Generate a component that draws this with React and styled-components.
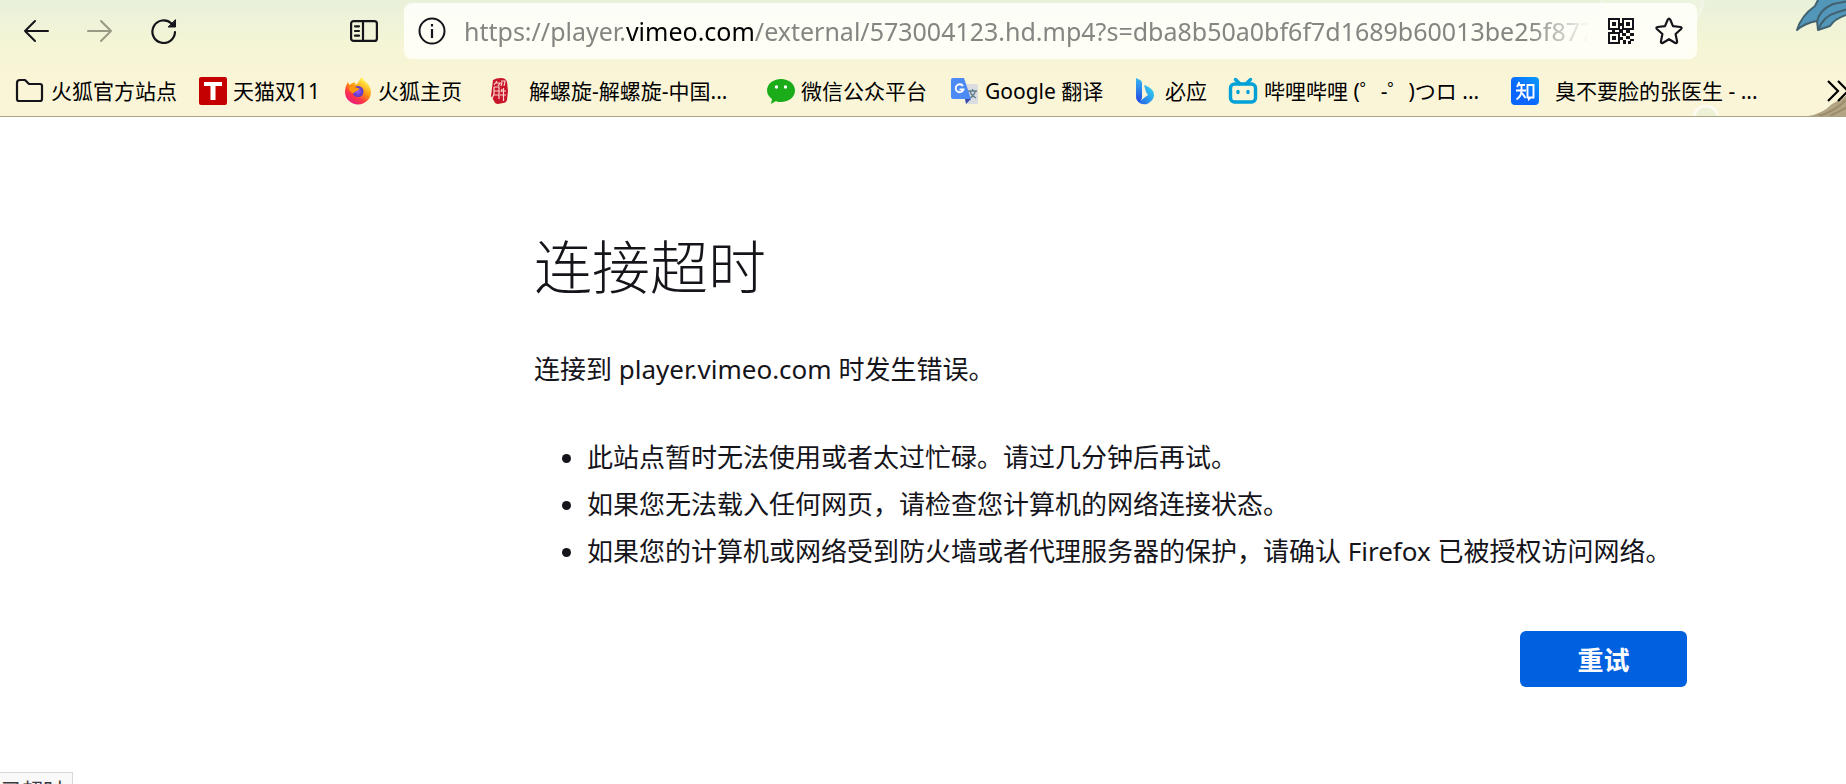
import React from "react";
import styled, { createGlobalStyle } from "styled-components";

const GlobalStyle = createGlobalStyle`
  * {
    box-sizing: border-box;
  }
  body {
    margin: 0;
    background: #fff;
    color: #15141a;
    font-family: "Noto Sans", "Noto Sans CJK SC", sans-serif;
  }
  button {
    font-family: inherit;
    cursor: pointer;
  }
`;

const Window = styled.div`
  display: flex;
  flex-direction: column;
  height: 100vh;
  overflow: hidden;
`;
const Chrome = styled.header`
  position: relative;
  border-bottom: 1px solid #a9a582;
  background: linear-gradient(#e9f1da 0, #f5f5d6 44px, #faf5d7 80px, #faf5d8 100%);
`;
const ThemeArt = styled.svg`
  position: absolute;
  top: 0;
  right: 0;
`;
const NavBar = styled.nav`
  position: relative;
  display: flex;
  align-items: center;
  height: 64px;
  padding: 0 149px 2px 20px;
`;
const IconButton = styled.button`
  display: flex;
  flex-shrink: 0;
  align-items: center;
  justify-content: center;
  width: 32px;
  height: 32px;
  margin-right: ${(props) => props.$gap || 0}px;
  padding: 0;
  border: 0;
  background: none;
  color: #15141a;
  &:disabled {
    color: #9a9984;
  }
`;
const UrlBar = styled.div`
  display: flex;
  flex: 1;
  align-items: center;
  gap: 16px;
  min-width: 0;
  height: 56px;
  padding: 0 12px;
  border-radius: 8px;
  background: rgba(255, 255, 250, 0.85);
`;
const UrlField = styled.label`
  position: relative;
  display: block;
  flex: 1;
  min-width: 0;
  overflow: hidden;
  font-size: 25px;
  line-height: 40px;
  white-space: nowrap;
  color: #858582;
  mask-image: linear-gradient(to left, transparent, #000 60px);
  b {
    font-weight: 400;
    color: #000;
  }
`;
const UrlInput = styled.input`
  position: absolute;
  inset: 0;
  width: 100%;
  border: 0;
  background: none;
  outline: 0;
`;
const Bookmarks = styled.nav`
  position: relative;
  display: flex;
  align-items: center;
  height: 52px;
  padding: 2px 0 0 14px;
  overflow: hidden;
`;
const Bookmark = styled.a`
  display: flex;
  flex-shrink: 0;
  align-items: center;
  width: ${(props) => props.$width}px;
  color: #000;
  font-size: 21px;
  line-height: 32px;
  white-space: nowrap;
  text-decoration: none;
  svg {
    flex-shrink: 0;
    margin-right: ${(props) => (props.$wide ? 16 : 6)}px;
  }
`;
const More = styled.button`
  display: flex;
  flex-shrink: 0;
  align-items: center;
  width: 20px;
  height: 32px;
  margin-left: auto;
  padding: 0;
  border: 0;
  background: none;
  overflow: hidden;
  svg {
    flex-shrink: 0;
  }
`;
const Page = styled.main`
  display: flex;
  flex: 1;
  justify-content: flex-end;
  min-height: 0;
  padding: 110px 159px 0 0;
`;
const ErrorBox = styled.section`
  width: 1153px;
  font-size: 26px;
`;
const Title = styled.h1`
  margin: 0;
  font-size: 58px;
  font-weight: 300;
  line-height: 80px;
`;
const Message = styled.p`
  margin: 42px 0 0;
  line-height: 40px;
`;
const Tips = styled.ul`
  margin: 45px 0 0;
  padding-left: 53px;
  line-height: 47px;
`;
const Actions = styled.div`
  display: flex;
  justify-content: flex-end;
  margin-top: 56px;
`;
const RetryButton = styled.button`
  min-width: 167px;
  height: 56px;
  padding: 0 24px;
  border: 0;
  border-radius: 6px;
  background: #0061e0;
  color: #fbfbfe;
  font-size: 26px;
  font-weight: 700;
`;
const StatusPanel = styled.div`
  align-self: flex-start;
  flex-shrink: 0;
  height: 12px;
  padding: 4px 8px 0 1px;
  border: 1px solid #d7d7db;
  border-width: 1px 1px 0 0;
  background: #f9f9fa;
  color: #38383d;
  font-size: 21px;
  line-height: 26px;
  overflow: hidden;
`;

const BackIcon = () => (
  <svg width="26" height="24" viewBox="0 0 26 24" fill="none" stroke="currentColor" strokeWidth="2" strokeLinecap="round" strokeLinejoin="round">
    <path d="M25 12H2M12 2 2 12l10 10" />
  </svg>
);
const ForwardIcon = () => (
  <svg width="26" height="24" viewBox="0 0 26 24" fill="none" stroke="currentColor" strokeWidth="2" strokeLinecap="round" strokeLinejoin="round">
    <path d="M1 12h23M14 2l10 10-10 10" />
  </svg>
);
const ReloadIcon = () => (
  <svg width="26" height="26" viewBox="0 0 26 26" fill="none" stroke="currentColor" strokeWidth="2.2" strokeLinecap="round">
    <path d="M24 14A11.3 11.3 0 1 1 20.5 5.5" />
    <path d="M24.5 2v7h-7z" fill="currentColor" strokeWidth="1" strokeLinejoin="round" />
  </svg>
);
const SidebarIcon = () => (
  <svg width="28" height="22" viewBox="0 0 28 22" fill="none" stroke="currentColor" strokeWidth="2.2" strokeLinecap="round">
    <rect x="1.1" y="1.1" width="25.8" height="19.8" rx="2.5" />
    <path d="M13 1v20M5 6.300h4M5 11h4M5 15.700h4" />
  </svg>
);
const InfoIcon = () => (
  <svg width="28" height="28" viewBox="0 0 28 28" fill="none" stroke="#15141a" strokeWidth="2">
    <circle cx="14" cy="14" r="12.500" />
    <path d="M14 12v9M14 7v2.500" strokeWidth="2.200" />
  </svg>
);
const QrIcon = () => (
  <svg width="26" height="26" viewBox="0 0 26 26" fill="#15141a">
    <path d="M1 1h10v10H1zM15 1h10v10H15zM1 15h10v10H1z" fill="none" stroke="#15141a" strokeWidth="2" />
    <path d="M4 4h4v4H4zM18 4h4v4h-4zM4 18h4v4H4z" />
    <path d="M11 5h4v3h-4zM4 12h3v3H4zM11 11h4v4h-4zM18 12h4v3h-4zM14 15h4v3h-4zM22 15h4v3h-4zM18 18h4v3h-4zM12 19h3v3h-3zM22 21h4v2h-4zM15 22h3v4h-3zM20 23h3v3h-3z" />
  </svg>
);
const StarIcon = () => (
  <svg width="28" height="28" viewBox="0 0 28 28" fill="none" stroke="#15141a" strokeWidth="2.200" strokeLinejoin="round">
    <path d="M12.800 2.500q1.200-2 2.400 0l2.800 6.700 7.400.8q2 .4.700 2L20.600 17l1.500 7.600q.1 2-1.800 1.400L14 22.200 7.700 26q-1.900.6-1.800-1.400L7.400 17 1.900 12q-1.300-1.600.7-2l7.400-.8z" />
  </svg>
);

const FolderIcon = () => (
  <svg width="31" height="28" viewBox="0 0 31 28" fill="none" stroke="#15141a" strokeWidth="2.200" strokeLinejoin="round">
    <path d="M3 6q0-3 3-3h5l4 4h11q2 0 2 2v13q0 2-2 2H5q-2 0-2-2z" />
  </svg>
);
const TmallIcon = () => (
  <svg width="28" height="28" viewBox="0 0 28 28">
    <rect width="28" height="28" rx="2" fill="#c40000" />
    <path d="M5 5h18v4h-6.500v14h-5V9H5z" fill="#fff" />
  </svg>
);
const FirefoxIcon = () => (
  <svg width="28" height="28" viewBox="0 0 28 28">
    <defs>
      <linearGradient id="fox" x1="0.8" y1="0" x2="0.2" y2="1">
        <stop offset="0.1" stopColor="#fff44f" />
        <stop offset="0.45" stopColor="#ff980e" />
        <stop offset="0.7" stopColor="#ff3647" />
        <stop offset="1" stopColor="#e31587" />
      </linearGradient>
      <radialGradient id="globe">
        <stop offset="0" stopColor="#9059ff" />
        <stop offset="1" stopColor="#5b33c0" />
      </radialGradient>
    </defs>
    <path d="M18 0c1 3 4 5 6 7 2 3 3 6 3 8a13 12.500 0 0 1-26 0c0-4 1-7 3-10l1.500 3 3-2c1 0 2-1 2-1l1 2.500c3-.5 3-4 6.500-7.500z" fill="url(#fox)" />
    <circle cx="14" cy="14.500" r="5.500" fill="url(#globe)" />
    <path d="M5 10.500c3-2 5-1 7 0l3.500 1c-1 3-4 2-5 4-1 2-5.500-1-5.500-5z" fill="#ff980e" />
  </svg>
);
const SealIcon = () => (
  <svg width="28" height="28" viewBox="0 0 28 28">
    <path d="M8 3q3-2 8-2 5 0 6 4l1 9-1 9q-1 3-4 3l-5 1q-3 0-4-3l-3-5 1-8z" fill="#c9152a" />
    <path d="M12 4l-3 4M11 6h4l-2 3M9 10v7l-2 5M9 10h5v12M9 14h5M9 18h5M16 4h4l-1 5M17 5l-1 4M17 12l-1 3M16 14h5M15 18h6M18.500 11v13" stroke="#f9d9cf" strokeWidth="1.200" fill="none" />
  </svg>
);
const WechatIcon = () => (
  <svg width="28" height="28" viewBox="0 0 28 28">
    <path d="M14 2c8 0 14 5 14 11.500S22 25 14 25c-2 0-4 0-5-1l-5 3 1-5C2 20 0 17 0 13.500 0 7 6 2 14 2z" fill="#1aad19" />
    <circle cx="9.500" cy="10" r="1.700" fill="#fff" />
    <circle cx="18.500" cy="10" r="1.700" fill="#fff" />
  </svg>
);
const TranslateIcon = () => (
  <svg width="28" height="28" viewBox="0 0 28 28">
    <path d="M10 7h15q2 0 2 2v16q0 2-2 2H16z" fill="#dadce0" />
    <path d="M17 14h9M21.500 12v2M19 14c1 4 4 6 6 7M24.500 14c-1 4-4 6-6 8" stroke="#607d8b" strokeWidth="1.300" fill="none" />
    <path d="M14 22h6l-5 5z" fill="#3949ab" />
    <path d="M2 1h11l7 21H2q-2 0-2-2V3q0-2 2-2z" fill="#4c8bf5" />
    <path d="M12 9a4 4 0 1 0 .500 3.500H8.500" stroke="#fff" strokeWidth="1.800" fill="none" />
  </svg>
);
const BingIcon = () => (
  <svg width="28" height="28" viewBox="0 0 28 28">
    <defs>
      <linearGradient id="bingStem" x1="0" y1="0" x2="0" y2="1">
        <stop offset="0" stopColor="#36b8f5" />
        <stop offset="1" stopColor="#2447df" />
      </linearGradient>
      <linearGradient id="bingBowl" x1="0" y1="1" x2="1" y2="0">
        <stop offset="0" stopColor="#2158e8" />
        <stop offset="1" stopColor="#38dff0" />
      </linearGradient>
    </defs>
    <path d="M13 8c6 2 10 5 10 10 0 4-3 7-7 9-4 1-8 0-10-4l3 1 8-6-2-3z" fill="url(#bingBowl)" />
    <path d="M5 1l4 2q2 1 2 3v15l-2 4q-4-1-4-5z" fill="url(#bingStem)" />
  </svg>
);
const BilibiliIcon = () => (
  <svg width="30" height="28" viewBox="0 0 30 28" fill="none" stroke="#00a1d6" strokeWidth="3.400" strokeLinecap="round">
    <rect x="2.500" y="7" width="25" height="18" rx="4" />
    <path d="M7.500 2.500l4 4M22.500 2.500l-4 4" />
    <path d="M10 14.500v1M20 14.500v1" />
  </svg>
);
const ZhihuIcon = () => (
  <svg width="28" height="28" viewBox="0 0 28 28">
    <defs>
      <linearGradient id="zhihu" x1="0" y1="1" x2="1" y2="0">
        <stop offset="0.4" stopColor="#0a66ff" />
        <stop offset="1" stopColor="#0a9cff" />
      </linearGradient>
    </defs>
    <rect width="28" height="28" rx="4" fill="url(#zhihu)" />
    <path d="M8.500 5L6 10M8 8h6M5 13.500h10M10.500 8v5.500c0 4-2 7-5 9M11 16l3.500 5" stroke="#fff" strokeWidth="1.900" fill="none" />
    <path d="M16.500 8h6v12.500h-3l-1.500 1.500v-1.500h-1.500z" stroke="#fff" strokeWidth="1.900" fill="none" />
  </svg>
);

const bookmarks = [
  { label: "火狐官方站点", icon: FolderIcon, width: 185 },
  { label: "天猫双11", icon: TmallIcon, width: 145 },
  { label: "火狐主页", icon: FirefoxIcon, width: 141 },
  { label: "解螺旋-解螺旋-中国...", icon: SealIcon, width: 282, wide: true },
  { label: "微信公众平台", icon: WechatIcon, width: 184 },
  { label: "Google 翻译", icon: TranslateIcon, width: 180 },
  { label: "必应", icon: BingIcon, width: 97 },
  { label: "哔哩哔哩 (゜-゜)つロ ...", icon: BilibiliIcon, width: 283 },
  { label: "臭不要脸的张医生 - ...", icon: ZhihuIcon, width: 270, wide: true },
];

const tips = [
  "此站点暂时无法使用或者太过忙碌。请过几分钟后再试。",
  "如果您无法载入任何网页，请检查您计算机的网络连接状态。",
  "如果您的计算机或网络受到防火墙或者代理服务器的保护，请确认 Firefox 已被授权访问网络。",
];

const App = () => {
  return (
    <Window>
      <GlobalStyle />
      <Chrome>
        <ThemeArt width="260" height="116" viewBox="0 0 260 116">
          {/* bubbles */}
          <circle cx="66" cy="-8" r="52" fill="#fff" opacity="0.15" />
          <circle cx="66" cy="-8" r="52" fill="none" stroke="#fff" strokeWidth="3" opacity="0.3" />
          <circle cx="120" cy="118" r="12" fill="#e6f0d4" stroke="#fff" strokeWidth="3" opacity="0.6" />
          {/* wing */}
          <g fill="#5296b9" stroke="#43626f" strokeWidth="2" strokeLinejoin="round">
            <path d="M211 30q4-14 18-24l4-8h30v16q-14 4-19 12l-12 4-1-9q-12 2-20 9z" />
            <path d="M231 22q2-12 16-18l15-3M232 30q5-14 20-18l10-3" fill="none" />
          </g>
          {/* branch */}
          <path d="M222 116q14-2 24-12l14-8v20z" fill="#b3a583" />
          <path d="M232 116q16-4 28-16M244 116l16-8" stroke="#9c8c6e" strokeWidth="2" fill="none" />
        </ThemeArt>
        <NavBar aria-label="导航">
          <IconButton aria-label="后退" $gap={32}><BackIcon /></IconButton>
          <IconButton aria-label="前进" disabled $gap={32}><ForwardIcon /></IconButton>
          <IconButton aria-label="重新加载" $gap={168}><ReloadIcon /></IconButton>
          <IconButton aria-label="侧栏" $gap={24}><SidebarIcon /></IconButton>
          <UrlBar>
            <IconButton aria-label="网站信息"><InfoIcon /></IconButton>
            <UrlField>
              https://player.<b>vimeo.com</b>/external/573004123.hd.mp4?s=dba8b50a0bf6f7d1689b60013be25f877
              <UrlInput aria-label="地址" />
            </UrlField>
            <IconButton aria-label="二维码"><QrIcon /></IconButton>
            <IconButton aria-label="收藏"><StarIcon /></IconButton>
          </UrlBar>
        </NavBar>
        <Bookmarks aria-label="书签">
          {bookmarks.map(({ label, icon: Icon, width, wide }) => (
            <Bookmark key={label} href="#" $width={width} $wide={wide}>
              <Icon />
              {label}
            </Bookmark>
          ))}
          <More aria-label="更多书签">
            <svg width="24" height="26" viewBox="0 0 24 26" fill="none" stroke="#000" strokeWidth="2.200">
              <path d="M2 3l10 10L2 23M12 3l10 10-10 10" />
            </svg>
          </More>
        </Bookmarks>
      </Chrome>
      <Page>
        <ErrorBox>
          <Title>连接超时</Title>
          <Message>连接到 player.vimeo.com 时发生错误。</Message>
          <Tips>
            {tips.map((tip) => (
              <li key={tip}>{tip}</li>
            ))}
          </Tips>
          <Actions>
            <RetryButton>重试</RetryButton>
          </Actions>
        </ErrorBox>
      </Page>
      <StatusPanel>已超时</StatusPanel>
    </Window>
  );
};

export default App;
